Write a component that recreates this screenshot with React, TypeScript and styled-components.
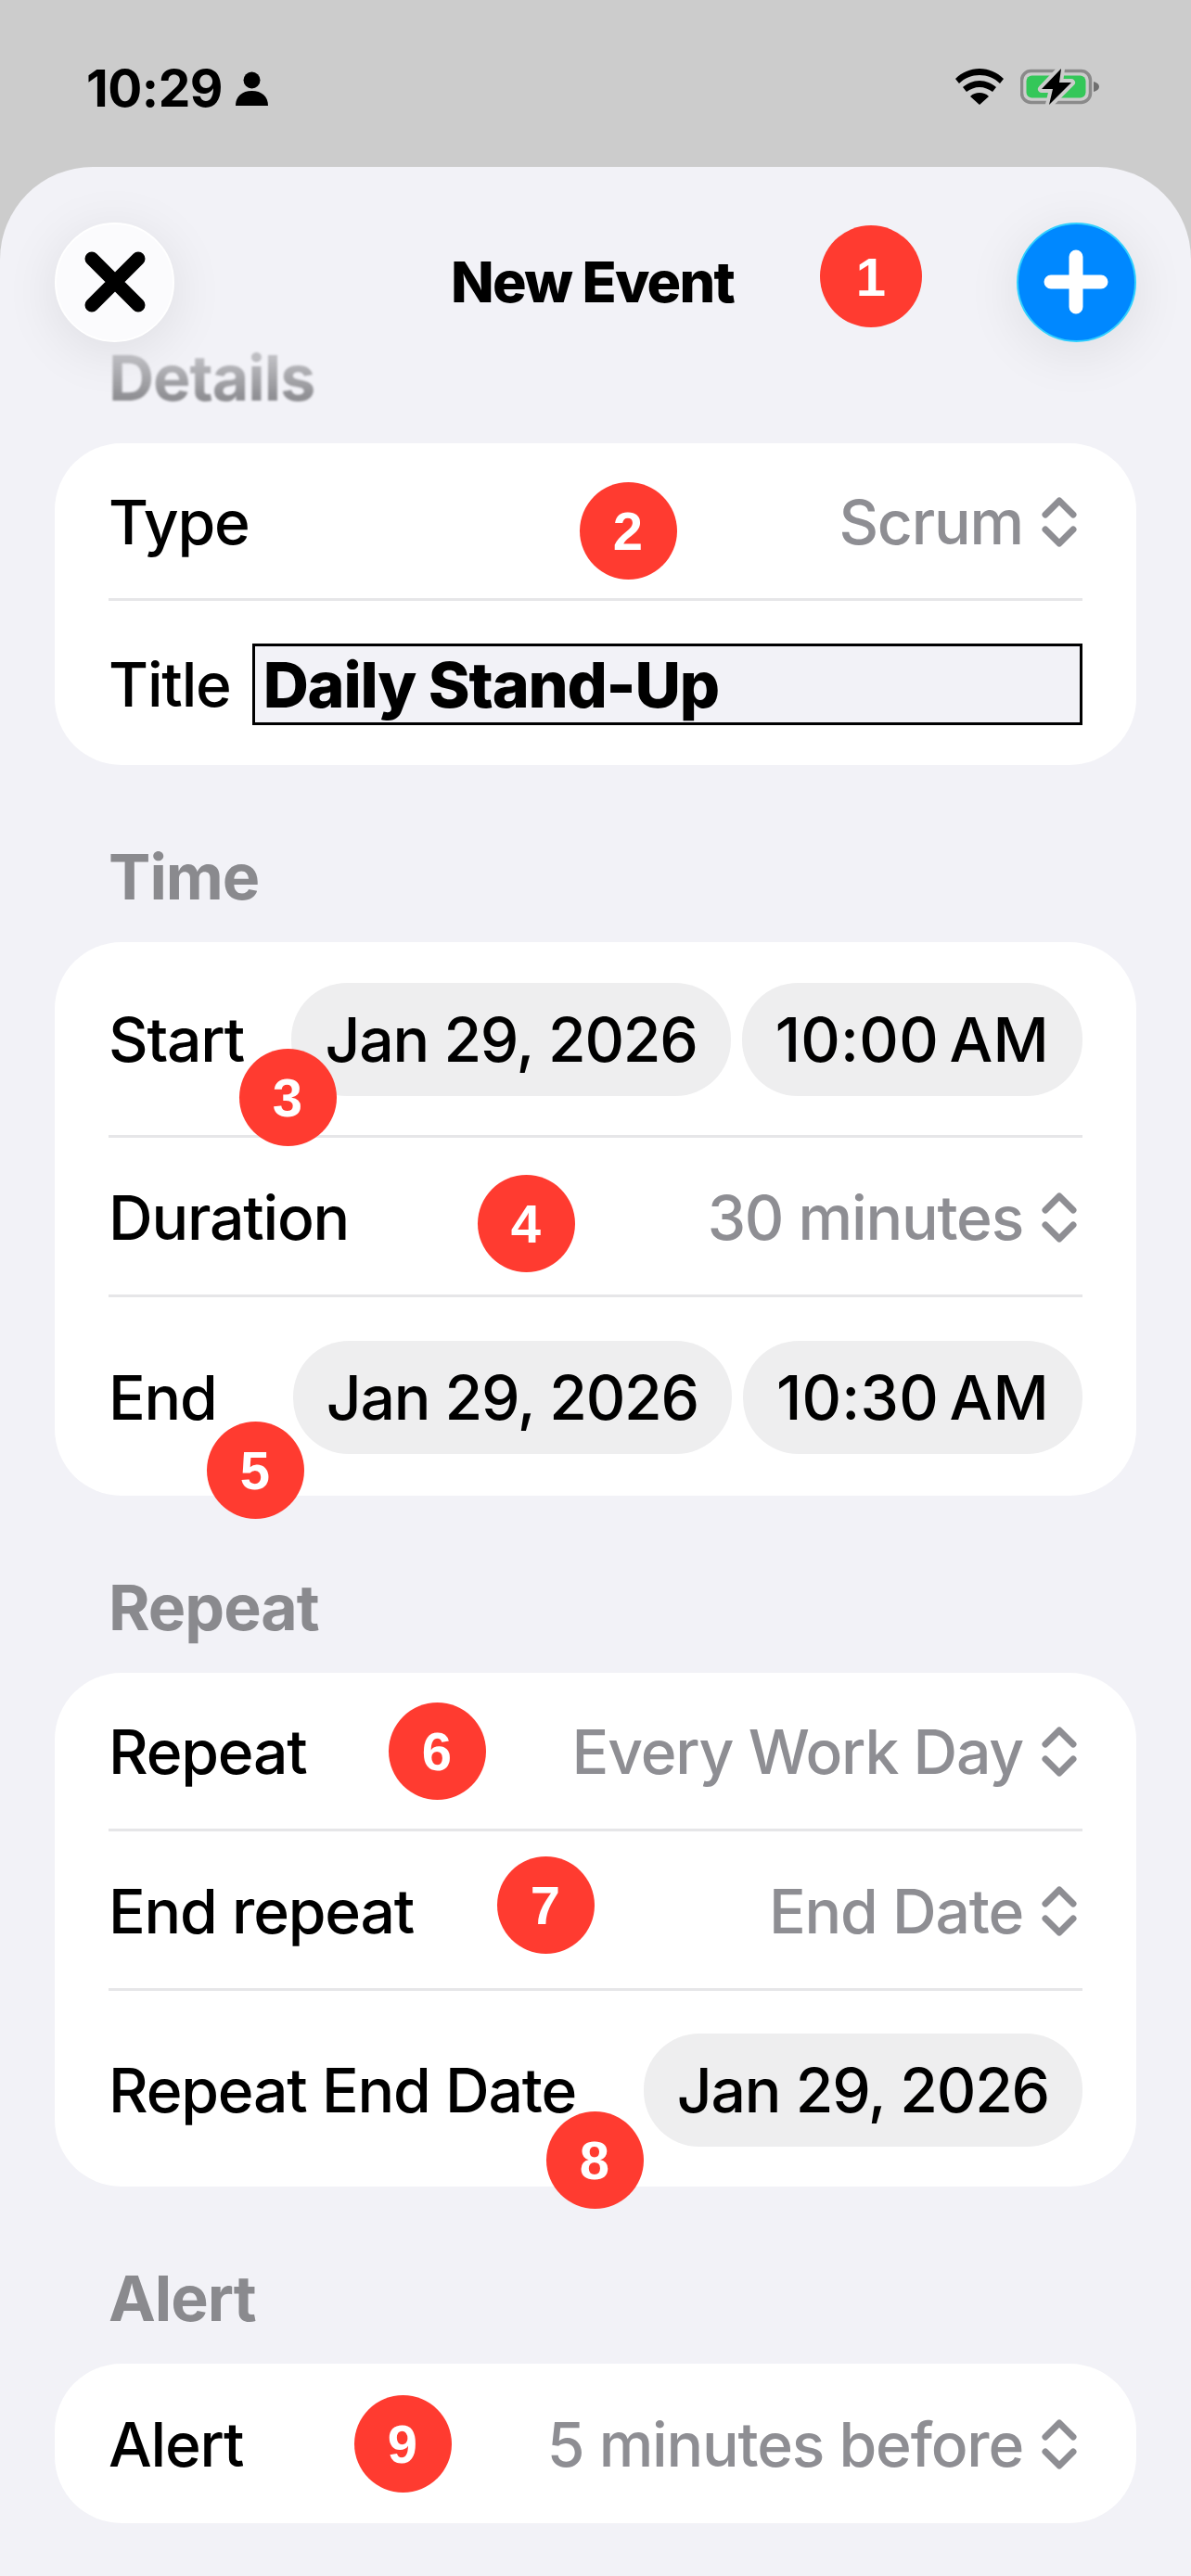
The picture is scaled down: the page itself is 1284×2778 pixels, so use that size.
import { ReactNode } from 'react'
import styled, { createGlobalStyle } from 'styled-components'

const GlobalStyle = createGlobalStyle`
  html, body {
    margin: 0;
    padding: 0;
    background: #cccccc;
  }
  * {
    box-sizing: border-box;
  }
`

const Page = styled.div`
  position: relative;
  width: 1284px;
  height: 2778px;
  overflow: hidden;
  background: #cccccc;
  font-family: Inter, "Liberation Sans", sans-serif;
  color: #000;
`

const StatusBar = styled.div`
  height: 180px;
  padding: 0 98px 0 93px;
  display: flex;
  align-items: flex-start;
  justify-content: space-between;
`

const StatusLeft = styled.div`
  margin-top: 67px;
  display: flex;
  align-items: center;
  gap: 14px;
  font-size: 55px;
  line-height: 56px;
  font-weight: 700;
  letter-spacing: -0.5px;
`

const StatusRight = styled.div`
  margin-top: 74px;
  display: flex;
  align-items: center;
  gap: 18px;
`

const Sheet = styled.div`
  height: 2598px;
  background: #f2f2f7;
  border-radius: 100px 100px 0 0;
  padding: 58px 59px 0 59px;
`

const NavBar = styled.div`
  display: flex;
  align-items: center;
  justify-content: space-between;
  height: 132px;
  margin-bottom: 2px;
`

const NavTitle = styled.div`
  margin-right: 7px;
  font-size: 61px;
  font-weight: 800;
  letter-spacing: -1.8px;
`

const RoundButton = styled.div<{ $bg: string; $edge: string }>`
  width: 129px;
  height: 129px;
  border-radius: 50%;
  background: ${(p) => p.$bg};
  border: 2px solid ${(p) => p.$edge};
  box-shadow: 0 10px 60px rgba(0, 0, 0, 0.09);
  display: flex;
  align-items: center;
  justify-content: center;
`

const SectionTitle = styled.div<{ $faded?: boolean }>`
  padding-left: 58px;
  font-size: 68px;
  line-height: 70px;
  font-weight: 700;
  letter-spacing: -1px;
  color: #8a8a8e;
  ${(p) =>
    p.$faded &&
    `
    filter: blur(1.2px);
    -webkit-mask-image: linear-gradient(to bottom, rgba(0, 0, 0, 0.5) 20%, rgba(0, 0, 0, 0.95) 80%);
    mask-image: linear-gradient(to bottom, rgba(0, 0, 0, 0.5) 20%, rgba(0, 0, 0, 0.95) 80%);
  `}
`

const Card = styled.div`
  margin-top: 36px;
  margin-bottom: 85px;
  width: 1166px;
  background: #fff;
  border-radius: 72px;
  padding: 0 58px;
`

const Row = styled.div<{ $h: number }>`
  display: flex;
  align-items: center;
  justify-content: space-between;
  height: ${(p) => p.$h}px;
  padding-top: 2px;
  border-bottom: 3px solid #e6e6e8;
  font-size: 66px;
  font-weight: 500;
  letter-spacing: -1.2px;
  white-space: nowrap;

  &:last-child {
    border-bottom: none;
  }
`

const Value = styled.div`
  display: flex;
  align-items: center;
  gap: 20px;
  padding-right: 6px;
  color: #8e8e93;
`

const Pills = styled.div`
  display: flex;
  gap: 12px;
`

const Pill = styled.div<{ $time?: boolean }>`
  height: 122px;
  padding: 0 36px;
  border-radius: 60px;
  background: #eeeeef;
  display: flex;
  align-items: center;
  letter-spacing: ${(p) => (p.$time ? '0.2px' : '-1.2px')};
`

const TitleField = styled.div`
  flex: 1;
  margin-left: 23px;
  height: 88px;
  padding-left: 9px;
  display: flex;
  align-items: center;
  background: #f2f2f7;
  border: 3px solid #000;
  font-size: 68px;
  font-weight: 800;
`

const Badge = styled.div<{ $x: number; $y: number; $size: number }>`
  position: absolute;
  left: ${(p) => p.$x - p.$size / 2}px;
  top: ${(p) => p.$y - p.$size / 2}px;
  width: ${(p) => p.$size}px;
  height: ${(p) => p.$size}px;
  border-radius: 50%;
  background: #ff3b30;
  color: #fff;
  font-family: "Liberation Sans", Arial, sans-serif;
  font-size: 58px;
  font-weight: 700;
  display: flex;
  align-items: center;
  justify-content: center;
`

const Wifi = () => (
  <svg width="52" height="39" viewBox="0 0 52 39">
    <path d="M26 0C16 0 7 4 0 11l4 5C10 10 18 7 26 7s16 3 22 9l4-5C45 4 36 0 26 0Z" fill="#000" />
    <path d="M26 13c-7 0-13 3-18 7l4 5c4-3 9-5 14-5s10 2 14 5l4-5c-5-4-11-7-18-7Z" fill="#000" />
    <path d="M26 26c-4 0-7 1-10 4l10 9 10-9c-3-3-6-4-10-4Z" fill="#000" />
  </svg>
)

const Battery = () => (
  <svg width="86" height="39" viewBox="0 0 86 39">
    <rect x="1.500" y="2.500" width="74" height="34" rx="10" fill="none" stroke="#8a8a8a" strokeWidth="3.500" />
    <rect x="6.500" y="7.500" width="64" height="24" rx="6" fill="#34c759" />
    <path d="M79 14c4 1 6 3 6 5.500s-2 4.500-6 5.500Z" fill="#6f6f6f" />
    <path d="M44 0 23 22h12l-4 17 24-24H42Z" fill="#000" stroke="#cccccc" strokeWidth="8" paintOrder="stroke" strokeLinejoin="round" />
  </svg>
)

const Person = () => (
  <svg width="35" height="37" viewBox="0 0 35 37">
    <circle cx="17.500" cy="9.500" r="9" fill="#000" />
    <path d="M0 37c0-10 7-16 17.500-16S35 27 35 37Z" fill="#000" />
  </svg>
)

const UpDown = () => (
  <svg width="38" height="56" viewBox="0 0 38 56" fill="none" stroke="#8e8e93" strokeWidth="7" strokeLinecap="round" strokeLinejoin="round">
    <path d="M4 20 19 5l15 15" />
    <path d="M4 36l15 15 15-15" />
  </svg>
)

const Close = () => (
  <svg width="66" height="66" viewBox="0 0 66 66" fill="none" stroke="#000" strokeWidth="15" strokeLinecap="round">
    <path d="M8 8l50 50M58 8 8 58" />
  </svg>
)

const Plus = () => (
  <svg width="70" height="70" viewBox="0 0 70 70" fill="none" stroke="#fff" strokeWidth="15" strokeLinecap="round">
    <path d="M35 8v54M8 35h54" />
  </svg>
)

const Picker = ({ children }: { children: ReactNode }) => (
  <Value>
    {children}
    <UpDown />
  </Value>
)

const badges = [
  { n: 1, x: 939, y: 298, size: 110 },
  { n: 2, x: 677, y: 572, size: 105 },
  { n: 3, x: 310, y: 1183, size: 105 },
  { n: 4, x: 567, y: 1319, size: 105 },
  { n: 5, x: 275, y: 1585, size: 105 },
  { n: 6, x: 471, y: 1888, size: 105 },
  { n: 7, x: 588, y: 2054, size: 105 },
  { n: 8, x: 641, y: 2329, size: 105 },
  { n: 9, x: 434, y: 2635, size: 105 },
]

export default function App() {
  return (
    <Page>
      <GlobalStyle />
      <StatusBar>
        <StatusLeft>
          10:29
          <Person />
        </StatusLeft>
        <StatusRight>
          <Wifi />
          <Battery />
        </StatusRight>
      </StatusBar>
      <Sheet>
        <NavBar>
          <RoundButton $bg="#fbfbfd" $edge="#ffffff">
            <Close />
          </RoundButton>
          <NavTitle>New Event</NavTitle>
          <RoundButton $bg="#0088ff" $edge="#30d0ff">
            <Plus />
          </RoundButton>
        </NavBar>
        <SectionTitle $faded>Details</SectionTitle>
        <Card>
          <Row $h={170}>
            Type
            <Picker>Scrum</Picker>
          </Row>
          <Row $h={177}>
            Title
            <TitleField>Daily Stand-Up</TitleField>
          </Row>
        </Card>
        <SectionTitle>Time</SectionTitle>
        <Card>
          <Row $h={211}>
            Start
            <Pills>
              <Pill>Jan 29, 2026</Pill>
              <Pill $time>10:00&#8201;AM</Pill>
            </Pills>
          </Row>
          <Row $h={172}>
            Duration
            <Picker>30 minutes</Picker>
          </Row>
          <Row $h={214}>
            End
            <Pills>
              <Pill>Jan 29, 2026</Pill>
              <Pill $time>10:30&#8201;AM</Pill>
            </Pills>
          </Row>
        </Card>
        <SectionTitle>Repeat</SectionTitle>
        <Card>
          <Row $h={171}>
            Repeat
            <Picker>Every Work Day</Picker>
          </Row>
          <Row $h={172}>
            End repeat
            <Picker>End Date</Picker>
          </Row>
          <Row $h={211}>
            Repeat End Date
            <Pill>Jan 29, 2026</Pill>
          </Row>
        </Card>
        <SectionTitle>Alert</SectionTitle>
        <Card>
          <Row $h={172}>
            Alert
            <Picker>5 minutes before</Picker>
          </Row>
        </Card>
      </Sheet>
      {badges.map((b) => (
        <Badge key={b.n} $x={b.x} $y={b.y} $size={b.size}>
          {b.n}
        </Badge>
      ))}
    </Page>
  )
}
